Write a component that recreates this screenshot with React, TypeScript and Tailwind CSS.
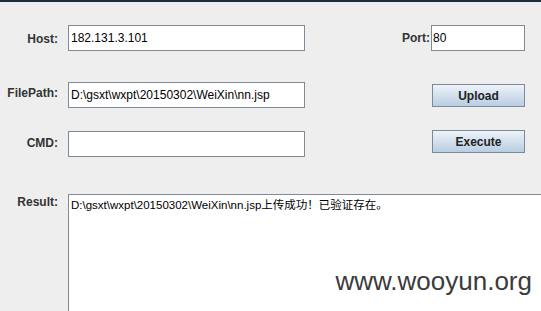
import React from "react";

const font = { fontFamily: '"Liberation Sans", Arial, "Noto Sans CJK SC", sans-serif' };

function Label({ text, className = "" }: { text: string; className?: string }) {
    return (
        <div className={`w-[58px] shrink-0 text-right text-[12px] font-bold text-[#333333] leading-none ${className}`}>
            {text}
        </div>
    );
}

function Field({ value, className = "" }: { value?: string; className?: string }) {
    return (
        <div
            className={`h-[26px] shrink-0 border border-[#7f8c97] bg-white pl-[2px] text-[12px] leading-[24px] text-black ${className}`}
        >
            {value}
        </div>
    );
}

function Button({ text, className = "" }: { text: string; className?: string }) {
    return (
        <div
            className={`flex h-[23px] w-[93px] shrink-0 items-center justify-center border border-[#7a8a99] bg-gradient-to-b from-[#eef3f9] to-[#b8cde3] text-[12px] font-bold text-[#222222] ${className}`}
        >
            {text}
        </div>
    );
}

export default function App() {
    return (
        <div
            style={font}
            className="relative h-[311px] w-[541px] overflow-hidden border-t-2 border-[#1b2d3d] bg-[#eeeeee]"
        >
            <div className="h-px bg-[#e6edf4]" />

            {/* Host / Port */}
            <div className="mt-[22px] flex items-start">
                <Label text="Host:" className="mt-[8px]" />
                <Field value="182.131.3.101" className="ml-[10px] w-[237px]" />
                <div className="ml-[97px] mt-[7px] text-[12px] font-bold leading-none text-[#333333]">Port:</div>
                <Field value="80" className="ml-px w-[94px] pl-px" />
            </div>

            {/* FilePath / Upload */}
            <div className="mt-[31px] flex items-start">
                <Label text="FilePath:" className="mt-[5px]" />
                <Field value="D:\gsxt\wxpt\20150302\WeiXin\nn.jsp" className="ml-[10px] w-[237px]" />
                <Button text="Upload" className="ml-[127px] mt-[2px]" />
            </div>

            {/* CMD / Execute */}
            <div className="mt-[23px] flex items-start">
                <Label text="CMD:" className="mt-[6px]" />
                <Field className="ml-[10px] w-[237px]" />
                <Button text="Execute" className="ml-[127px] -mt-px" />
            </div>

            {/* Result */}
            <div className="mt-[37px] flex items-start">
                <Label text="Result:" className="mt-[2px]" />
                <div className="ml-[10px] h-[130px] flex-1 border-l border-t border-[#7f8c97] bg-white pl-[2px] pt-[3px] text-[11.5px] leading-[14px] text-black">
                    D:\gsxt\wxpt\20150302\WeiXin\nn.jsp上传成功！已验证存在。
                </div>
            </div>

            {/* watermark */}
            <div className="absolute right-[9px] top-[264px] text-[26px] leading-[30px] text-[#3b3b3b]">
                www.wooyun.org
            </div>
        </div>
    );
}
